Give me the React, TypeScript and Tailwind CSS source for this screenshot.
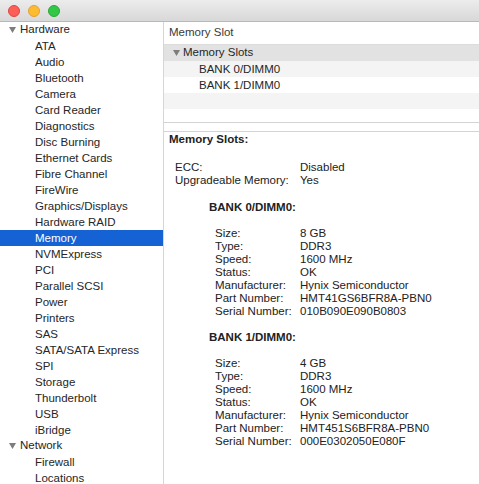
import React from "react";

const hardware = [
  "ATA",
  "Audio",
  "Bluetooth",
  "Camera",
  "Card Reader",
  "Diagnostics",
  "Disc Burning",
  "Ethernet Cards",
  "Fibre Channel",
  "FireWire",
  "Graphics/Displays",
  "Hardware RAID",
  "Memory",
  "NVMExpress",
  "PCI",
  "Parallel SCSI",
  "Power",
  "Printers",
  "SAS",
  "SATA/SATA Express",
  "SPI",
  "Storage",
  "Thunderbolt",
  "USB",
  "iBridge",
];

const network = ["Firewall", "Locations"];

const banks = [
  {
    name: "BANK 0/DIMM0:",
    rows: [
      ["Size:", "8 GB"],
      ["Type:", "DDR3"],
      ["Speed:", "1600 MHz"],
      ["Status:", "OK"],
      ["Manufacturer:", "Hynix Semiconductor"],
      ["Part Number:", "HMT41GS6BFR8A-PBN0"],
      ["Serial Number:", "010B090E090B0803"],
    ],
  },
  {
    name: "BANK 1/DIMM0:",
    rows: [
      ["Size:", "4 GB"],
      ["Type:", "DDR3"],
      ["Speed:", "1600 MHz"],
      ["Status:", "OK"],
      ["Manufacturer:", "Hynix Semiconductor"],
      ["Part Number:", "HMT451S6BFR8A-PBN0"],
      ["Serial Number:", "000E0302050E080F"],
    ],
  },
];

function Triangle() {
  return (
    <svg width="7" height="6" viewBox="0 0 7 6" className="shrink-0">
      <path d="M0 0H7L3.5 6Z" fill="#7d7d7d" />
    </svg>
  );
}

function GroupRow({ label }: { label: string }) {
  return (
    <div className="flex h-4 items-center gap-[4px] pl-[9px] text-[#262626]">
      <Triangle />
      <span>{label}</span>
    </div>
  );
}

function ItemRow({ label }: { label: string }) {
  const active = label === "Memory";
  return (
    <div
      className={
        active
          ? "h-4 bg-[#1562d4] pl-[35px] leading-4 text-white"
          : "h-4 pl-[35px] leading-4 text-[#262626]"
      }
    >
      {label}
    </div>
  );
}

export default function App() {
  return (
    <div className="flex h-[484px] w-[479px] flex-col overflow-hidden bg-white font-['Liberation_Sans',Arial,sans-serif] text-[11.5px]">
      {/* title bar */}
      <div className="flex h-[22px] shrink-0 items-center gap-[8px] border-b border-[#b9b9b9] bg-gradient-to-b from-[#ececec] to-[#d8d8d8] pl-[8px]">
        <div className="h-3 w-3 rounded-full border border-[#e2463f] bg-[#fc5f57]" />
        <div className="h-3 w-3 rounded-full border border-[#e1a13a] bg-[#fdbb2e]" />
        <div className="h-3 w-3 rounded-full border border-[#2aa73a] bg-[#33c748]" />
      </div>

      <div className="flex min-h-0 flex-1">
        {/* sidebar */}
        <div className="w-[164px] shrink-0 border-r border-[#d6d6d6]">
          <GroupRow label="Hardware" />
          {hardware.map((h) => (
            <ItemRow key={h} label={h} />
          ))}
          <GroupRow label="Network" />
          {network.map((n) => (
            <ItemRow key={n} label={n} />
          ))}
        </div>

        {/* main */}
        <div className="flex min-w-0 flex-1 flex-col">
          <div className="h-[100px] shrink-0">
            <div className="flex h-[23px] items-center border-b border-[#dcdcdc] pl-[5px] text-[#3a3a3a]">
              Memory Slot
            </div>
            <div className="flex h-4 items-center gap-[3px] bg-[#e2e2e2] pl-[9px] text-[#262626]">
              <Triangle />
              <span>Memory Slots</span>
            </div>
            <div className="h-4 bg-[#f4f4f4] pl-[35px] leading-4 text-[#262626]">BANK 0/DIMM0</div>
            <div className="h-4 pl-[35px] leading-4 text-[#262626]">BANK 1/DIMM0</div>
            <div className="h-4 bg-[#f4f4f4]" />
          </div>
          <div className="h-[10px] shrink-0 border-y border-[#d4d4d4] bg-white" />

          <div className="flex-1 pl-[5px] pt-px leading-[13px] text-[#222]">
            <div className="font-bold">Memory Slots:</div>
            <div className="mt-[15px] grid grid-cols-[125px_1fr] pl-[6px]">
              <span>ECC:</span>
              <span>Disabled</span>
              <span>Upgradeable Memory:</span>
              <span>Yes</span>
            </div>
            {banks.map((b, i) => (
              <div key={b.name} className={i === 0 ? "mt-[14px] pl-[40px]" : "mt-[13px] pl-[40px]"}>
                <div className="font-bold">{b.name}</div>
                <div className="mt-[13px] grid grid-cols-[85px_1fr] pl-[6px]">
                  {b.rows.map(([k, v]) => (
                    <React.Fragment key={k}>
                      <span>{k}</span>
                      <span>{v}</span>
                    </React.Fragment>
                  ))}
                </div>
              </div>
            ))}
          </div>
        </div>
      </div>
    </div>
  );
}
